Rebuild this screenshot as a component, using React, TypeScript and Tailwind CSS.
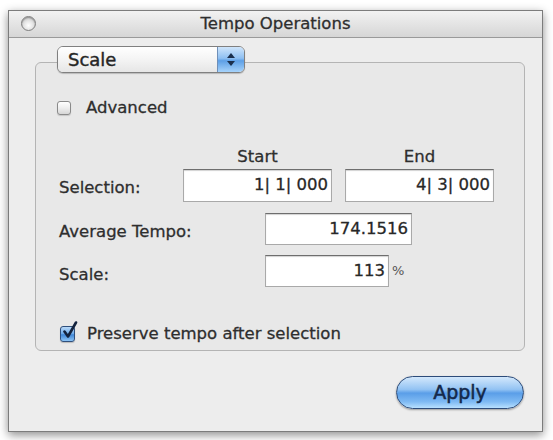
import React from 'react'

const font = { fontFamily: '"DejaVu Sans", "Liberation Sans", sans-serif' }

function CloseButton() {
  return (
    <div className="h-[15px] w-[15px] rounded-full border border-[#7f7f7f] bg-[radial-gradient(circle_at_50%_65%,#ffffff_0%,#e4e4e4_45%,#a9a9a9_100%)] shadow-[inset_0_1px_1px_rgba(0,0,0,0.25)]" />
  )
}

function PopupButton({ label }: { label: string }) {
  return (
    <div className="-mt-[17px] flex h-[27px] w-[188px] rounded-[6px] border border-[#808080] bg-white shadow-[0_1px_1px_rgba(0,0,0,0.2)]">
      <div className="flex flex-1 items-center rounded-l-[5px] bg-[linear-gradient(#ffffff,#f4f4f4_50%,#e6e6e6)] pl-[10px] text-[18px] leading-none text-[#262626] [-webkit-text-stroke:0.4px_#262626]">
        {label}
      </div>
      <div className="flex w-[27px] flex-col items-center justify-center gap-[3px] rounded-r-[5px] border-l border-[#6f8fb8] bg-[linear-gradient(#cfe5fb,#8fc0f2_45%,#5d9fe6_55%,#a6d3fb)]">
        <svg width="8" height="5" viewBox="0 0 8 5">
          <path d="M4 0 L8 5 L0 5 Z" fill="#1b2f4d" />
        </svg>
        <svg width="8" height="5" viewBox="0 0 8 5">
          <path d="M0 0 L8 0 L4 5 Z" fill="#1b2f4d" />
        </svg>
      </div>
    </div>
  )
}

function Field({ value, width }: { value: string; width: string }) {
  return (
    <div
      className={`${width} flex h-full items-center justify-end border border-[#a9a9a9] border-t-[#6e6e6e] bg-white pr-[3px] text-[16.5px] text-[#262626] shadow-[inset_0_1px_1px_rgba(0,0,0,0.18)]`}
    >
      {value}
    </div>
  )
}

export default function App() {
  return (
    <div className="h-[440px] w-[553px] bg-white pl-[8px] pt-[10px]" style={font}>
      <div className="flex h-[422px] w-[535px] flex-col border border-[#7c7c7c] bg-[#ededed] shadow-[0_3px_9px_rgba(0,0,0,0.45)] [-webkit-text-stroke:0.3px_#2e2e2e]">
        {/* title bar */}
        <div className="relative flex h-[27px] shrink-0 items-center justify-center border-b border-[#9a9a9a] bg-[linear-gradient(#f2f2f2,#e4e4e4_50%,#d6d6d6)]">
          <div className="absolute left-[12px] top-[5px]">
            <CloseButton />
          </div>
          <span className="text-[16.5px] text-[#2e2e2e]">Tempo Operations</span>
        </div>

        {/* body */}
        <div className="flex flex-1 flex-col">
          <div className="ml-[26px] mr-[17px] mt-[24px] flex h-[289px] flex-col rounded-[6px] border border-[#b4b4b4] bg-[#e8e8e8] pl-[21px] text-[16.5px] text-[#2e2e2e]">
            <PopupButton label="Scale" />

            <div className="mt-[25px] flex h-[20px] items-center">
              <div className="h-[14px] w-[14px] rounded-[3px] border border-[#8a8a8a] bg-[linear-gradient(#ffffff,#eeeeee_50%,#d6d6d6)] shadow-[0_1px_1px_rgba(0,0,0,0.15)]" />
              <span className="ml-[15px]">Advanced</span>
            </div>

            <div className="ml-[126px] mt-[29px] flex h-[20px] items-center">
              <span className="w-[149px] text-center">Start</span>
              <span className="ml-[13px] w-[149px] text-center">End</span>
            </div>

            <div className="mt-[2px] flex h-[33px] items-center">
              <span className="ml-[2px] w-[124px] pt-[6px]">Selection:</span>
              <Field value="1| 1| 000" width="w-[149px]" />
              <div className="w-[13px]" />
              <Field value="4| 3| 000" width="w-[149px]" />
            </div>

            <div className="mt-[11px] flex h-[32px] items-center">
              <span className="ml-[2px] w-[206px] pt-[7px]">Average Tempo:</span>
              <Field value="174.1516" width="w-[147px]" />
            </div>

            <div className="mt-[10px] flex h-[32px] items-center">
              <span className="ml-[2px] w-[206px] pt-[8px]">Scale:</span>
              <Field value="113" width="w-[124px]" />
              <span className="ml-[3px] text-[13px] text-[#555] [-webkit-text-stroke:0px]">%</span>
            </div>

            <div className="mt-[37px] flex h-[20px] items-center">
              <div className="relative ml-[3px] h-[16px] w-[15px] rounded-[3px] border border-[#2f4f7c] bg-[linear-gradient(#b9d9f8,#6aa9ea_50%,#3f86d6_55%,#8cc4f6)] shadow-[0_1px_1px_rgba(0,0,0,0.2)]">
                <svg className="absolute -top-[6px] left-[1px]" width="16" height="19" viewBox="0 0 16 19">
                  <path d="M2.5 10.5 L6 15.5 L14 1.5" fill="none" stroke="#12223d" strokeWidth="2.6" strokeLinecap="round" strokeLinejoin="round" />
                </svg>
              </div>
              <span className="ml-[12px]">Preserve tempo after selection</span>
            </div>
          </div>

          <div className="mr-[18px] mt-[25px] flex justify-end">
            <div className="flex h-[33px] w-[128px] items-center justify-center rounded-full border border-[#2d4c7a] bg-[linear-gradient(#d3e8fc,#93c3f3_40%,#5a9ee8_52%,#7fbaf3_80%,#b8e0ff)] text-[19px] text-[#14284a] shadow-[0_1px_2px_rgba(0,0,0,0.35)] [-webkit-text-stroke:0.5px_#14284a]">
              Apply
            </div>
          </div>
        </div>
      </div>
    </div>
  )
}
